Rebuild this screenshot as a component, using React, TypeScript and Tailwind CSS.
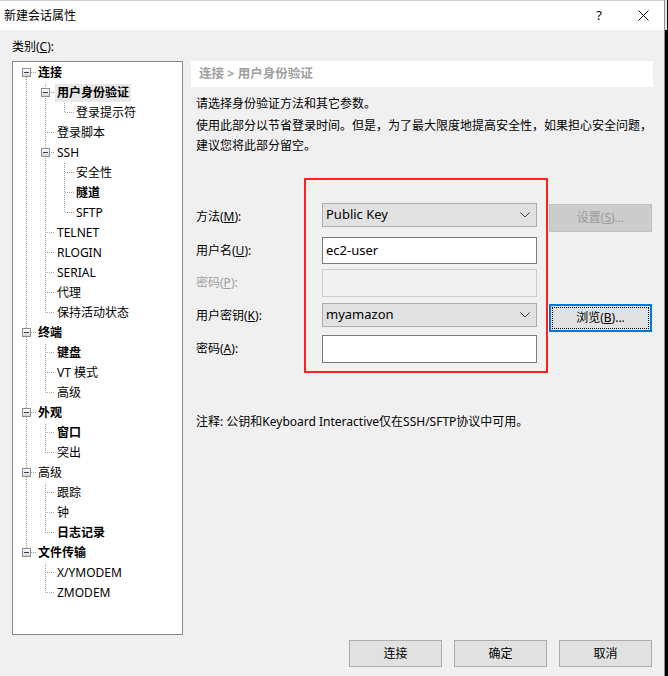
import React from "react";

type TreeNode = {
  label: string;
  level: number;
  bold?: boolean;
  box?: boolean;
  selected?: boolean;
};

const nodes: TreeNode[] = [
  { label: "连接", level: 0, bold: true, box: true },
  { label: "用户身份验证", level: 1, bold: true, box: true, selected: true },
  { label: "登录提示符", level: 2 },
  { label: "登录脚本", level: 1 },
  { label: "SSH", level: 1, box: true },
  { label: "安全性", level: 2 },
  { label: "隧道", level: 2, bold: true },
  { label: "SFTP", level: 2 },
  { label: "TELNET", level: 1 },
  { label: "RLOGIN", level: 1 },
  { label: "SERIAL", level: 1 },
  { label: "代理", level: 1 },
  { label: "保持活动状态", level: 1 },
  { label: "终端", level: 0, bold: true, box: true },
  { label: "键盘", level: 1, bold: true },
  { label: "VT 模式", level: 1 },
  { label: "高级", level: 1 },
  { label: "外观", level: 0, bold: true, box: true },
  { label: "窗口", level: 1, bold: true },
  { label: "突出", level: 1 },
  { label: "高级", level: 0, box: true },
  { label: "跟踪", level: 1 },
  { label: "钟", level: 1 },
  { label: "日志记录", level: 1, bold: true },
  { label: "文件传输", level: 0, bold: true, box: true },
  { label: "X/YMODEM", level: 1 },
  { label: "ZMODEM", level: 1 },
];

function hasNext(i: number) {
  const l = nodes[i].level;
  for (let j = i + 1; j < nodes.length; j++) {
    if (nodes[j].level < l) return false;
    if (nodes[j].level === l) return true;
  }
  return false;
}

function ancestorContinues(i: number, d: number) {
  for (let j = i - 1; j >= 0; j--) {
    if (nodes[j].level === d) return hasNext(j);
  }
  return false;
}

const DOT = "#a0a0a0";

function vDots(x: number, y0: number, y1: number, key: string) {
  const out: React.ReactNode[] = [];
  for (let y = y0; y <= y1; y++) {
    if ((x + y) % 2 === 1) out.push(<rect key={`${key}-${y}`} x={x} y={y} width={1} height={1} fill={DOT} />);
  }
  return out;
}

function hDots(y: number, x0: number, x1: number, key: string) {
  const out: React.ReactNode[] = [];
  for (let x = x0; x <= x1; x++) {
    if ((x + y) % 2 === 1) out.push(<rect key={`${key}-${x}`} x={x} y={y} width={1} height={1} fill={DOT} />);
  }
  return out;
}

function Guides({ i }: { i: number }) {
  const n = nodes[i];
  const w = 23 + 19 * n.level;
  const cx = 13 + 19 * n.level;
  const parts: React.ReactNode[] = [];
  for (let d = 0; d < n.level; d++) {
    if (ancestorContinues(i, d)) parts.push(...vDots(13 + 19 * d, 0, 19, `a${d}`));
  }
  if (i !== 0) parts.push(...vDots(cx, 0, 9, "top"));
  if (hasNext(i)) parts.push(...vDots(cx, 9, 19, "bot"));
  parts.push(...hDots(9, cx + 1, w - 1, "h"));
  return (
    <svg width={w} height={20} className="shrink-0" shapeRendering="crispEdges">
      <defs>
        <linearGradient id="bx" x1="0" y1="0" x2="0" y2="1">
          <stop offset="0" stopColor="#ffffff" />
          <stop offset="1" stopColor="#d4d4d4" />
        </linearGradient>
      </defs>
      {parts}
      {n.box && (
        <g>
          <rect x={cx - 4 + 0.5} y={5.5} width={8} height={8} fill="url(#bx)" stroke="#8e8f8f" />
          <rect x={cx - 2} y={9} width={5} height={1} fill="#2f3f5f" />
        </g>
      )}
    </svg>
  );
}

function Chevron() {
  return (
    <svg width="10" height="6" viewBox="0 0 10 6" className="shrink-0">
      <polyline points="0.5,0.5 5,5 9.5,0.5" fill="none" stroke="#3a3a3a" strokeWidth="1" />
    </svg>
  );
}

const font = "font-['Noto_Sans','Noto_Sans_CJK_SC',sans-serif]";

export default function App() {
  return (
    <div className={`flex h-[676px] w-[668px] bg-black text-[12px] text-black ${font}`}>
      <div className="flex w-[665px] flex-col border-r border-[#8c8c8c] bg-[#f0f0f0]">
        {/* title bar */}
        <div className="flex h-[30px] items-center border-t border-[#d0d0d0] bg-white pl-[4px]">
          <span className="leading-[20px]">新建会话属性</span>
          <span className="ml-auto mr-[36px] text-[13px]">?</span>
          <svg width="11" height="11" viewBox="0 0 11 11" className="mr-[15px]">
            <path d="M0.5 0.5 L10.5 10.5 M10.5 0.5 L0.5 10.5" stroke="#111" strokeWidth="1" />
          </svg>
        </div>

        <div className="flex h-[646px] pl-[12px] pb-[9px]">
          {/* category tree */}
          <div className="flex w-[171px] flex-col">
            <div className="mt-[7px] h-[20px] leading-[20px]">
              类别(<span className="underline">C</span>):
            </div>
            <div className="mt-[4px] h-[574px] border border-[#828790] bg-white pt-px">
              {nodes.map((n, i) => (
                <div key={i} className="flex h-[20px] items-center">
                  <Guides i={i} />
                  <span
                    className={`flex h-[18px] items-center px-[2px] leading-[18px] whitespace-nowrap ${
                      n.bold ? "font-bold" : ""
                    } ${n.selected ? "bg-[#e8e8e8]" : ""}`}
                  >
                    {n.label}
                  </span>
                </div>
              ))}
            </div>
          </div>

          {/* right panel */}
          <div className="ml-[8px] flex w-[462px] flex-col pt-[31px]">
            <div className="flex h-[26px] items-center bg-white px-[8px] text-[12.5px] font-bold text-[#a0a0a0]">
              连接 &gt; 用户身份验证
            </div>
            <div className="mt-[7px] pl-[5px] leading-[20px]">请选择身份验证方法和其它参数。</div>
            <div className="mt-[2px] pl-[5px] leading-[20px]">
              使用此部分以节省登录时间。但是，为了最大限度地提高安全性，如果担心安全问题，
              <br />
              建议您将此部分留空。
            </div>

            <div className="relative mt-[47px] flex flex-col pl-[5px]">
              <div className="pointer-events-none absolute left-[113px] top-[-25px] h-[195px] w-[244px] border-2 border-[#ff1f1f]" />

              <div className="flex items-start">
                <div className="flex h-[27px] w-[126px] items-center">
                  方法(<span className="underline">M</span>):
                </div>
                <div className="flex h-[24px] w-[215px] items-center border border-[#adadad] bg-[#e1e1e1] pl-[3px] pr-[6px] text-[13px]">
                  <span className="flex-1">Public Key</span>
                  <Chevron />
                </div>
                <div className="ml-[12px] mt-px flex h-[28px] w-[103px] items-center justify-center border border-[#bfbfbf] bg-[#cccccc] text-[#9a9a9a]">
                  设置(<span className="underline">S</span>)...
                </div>
              </div>

              <div className="mt-[5px] flex items-center">
                <div className="flex h-[27px] w-[126px] items-center">
                  用户名(<span className="underline">U</span>):
                </div>
                <div className="flex h-[27px] w-[215px] items-center border border-[#7a7a7a] bg-white pl-[3px] text-[13px]">
                  ec2-user
                </div>
              </div>

              <div className="mt-[5px] flex items-center">
                <div className="flex h-[28px] w-[126px] items-center text-[#a0a0a0]">
                  密码(<span className="underline">P</span>):
                </div>
                <div className="h-[28px] w-[215px] border border-[#cccccc] bg-[#f0f0f0]" />
              </div>

              <div className="mt-[6px] flex items-start">
                <div className="flex h-[26px] w-[126px] items-center">
                  用户密钥(<span className="underline">K</span>):
                </div>
                <div className="flex h-[24px] w-[215px] items-center border border-[#adadad] bg-[#e1e1e1] pl-[3px] pr-[6px] text-[13px]">
                  <span className="flex-1">myamazon</span>
                  <Chevron />
                </div>
                <div className="ml-[12px] mt-px flex h-[28px] w-[103px] items-center justify-center border-2 border-[#0078d7] bg-[#e1e1e1] p-px">
                  <div className="flex h-full w-full items-center justify-center border border-dotted border-black">
                    浏览(<span className="underline">B</span>)...
                  </div>
                </div>
              </div>

              <div className="mt-[3px] flex items-center">
                <div className="flex h-[28px] w-[126px] items-center">
                  密码(<span className="underline">A</span>):
                </div>
                <div className="h-[28px] w-[215px] border border-[#7a7a7a] bg-white" />
              </div>
            </div>

            <div className="mt-[49px] pl-[5px] leading-[20px]">
              注释: 公钥和Keyboard Interactive仅在SSH/SFTP协议中可用。
            </div>

            <div className="mt-auto flex justify-end gap-[12px] pr-px">
              {["连接", "确定", "取消"].map((b) => (
                <div
                  key={b}
                  className="flex h-[27px] w-[93px] items-center justify-center border border-[#adadad] bg-[#e1e1e1]"
                >
                  {b}
                </div>
              ))}
            </div>
          </div>
        </div>
      </div>
      <div className="flex w-[2px] flex-col">
        <div className="h-[30px] bg-[#e8e8e8]" />
      </div>
    </div>
  );
}
